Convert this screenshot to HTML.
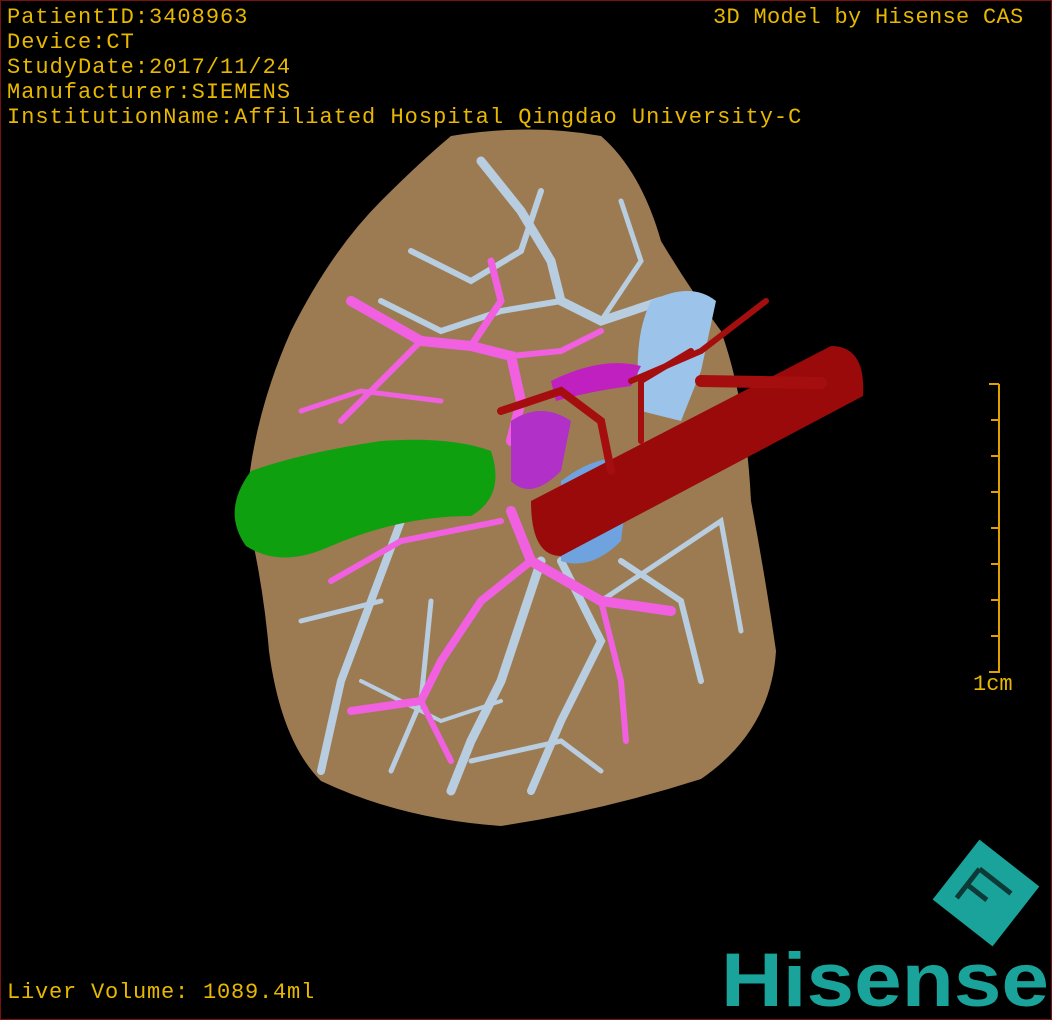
<!DOCTYPE html>
<html><head><meta charset="utf-8"><style>
html,body{margin:0;padding:0;background:#000}
#c{position:relative;width:1050px;height:1018px;border:1px solid #7a1010;background:#000;overflow:hidden;font-family:"Liberation Mono","DejaVu Sans Mono",monospace}
.t{position:absolute;color:#e8b800;font-size:22px;line-height:25px;white-space:pre;letter-spacing:1px}
</style></head><body><div id="c">
<svg width="1050" height="1018" style="position:absolute;left:0;top:0">
<path d="M450,135 Q530,122 600,135 Q640,170 660,240 Q690,290 720,330 Q745,400 750,500 Q765,580 775,650 Q770,730 700,778 Q600,810 500,825 Q400,818 320,780 Q280,740 268,650 Q262,580 245,510 Q250,420 290,330 Q330,250 380,200 Q420,160 450,135Z" fill="#9c7b52"/>
<g fill="none" stroke="#b8cde0" stroke-linecap="round">
<path d="M480,160 L520,210 L550,260 L560,300 L600,320 L660,300" stroke-width="9"/>
<path d="M540,190 L520,250 L470,280 L410,250" stroke-width="6"/>
<path d="M560,300 L500,310 L440,330 L380,300" stroke-width="6"/>
<path d="M600,320 L640,260 L620,200" stroke-width="5"/>
<path d="M540,560 L520,620 L500,680 L470,740 L450,790" stroke-width="9"/>
<path d="M560,560 L600,640 L560,720 L530,790" stroke-width="8"/>
<path d="M620,560 L680,600 L700,680" stroke-width="6"/>
<path d="M400,520 L370,600 L340,680 L320,770" stroke-width="8"/>
<path d="M380,600 L300,620" stroke-width="5"/>
<path d="M430,600 L420,700 L390,770" stroke-width="5"/>
<path d="M600,600 L720,520 L740,630" stroke-width="5"/>
<path d="M470,760 L560,740 L600,770" stroke-width="5"/>
<path d="M360,680 L440,720 L500,700" stroke-width="4"/>
</g>
<g fill="none" stroke="#f060e0" stroke-linecap="round">
<path d="M350,300 L420,340 L470,345 L510,355 L520,400 L510,440" stroke-width="10"/>
<path d="M470,345 L500,300 L490,260" stroke-width="7"/>
<path d="M420,340 L380,380 L340,420" stroke-width="6"/>
<path d="M510,355 L560,350 L600,330" stroke-width="6"/>
<path d="M510,510 L530,560 L600,600 L670,610" stroke-width="10"/>
<path d="M530,560 L480,600 L440,660 L420,700 L350,710" stroke-width="8"/>
<path d="M420,700 L450,760" stroke-width="6"/>
<path d="M500,520 L400,540 L330,580" stroke-width="6"/>
<path d="M600,600 L620,680 L625,740" stroke-width="6"/>
<path d="M440,400 L360,390 L300,410" stroke-width="5"/>
</g>
<path d="M650,300 Q690,280 715,300 L700,370 L680,420 L640,410 Q630,340 650,300Z" fill="#9cc3ea"/>
<path d="M560,480 Q600,450 630,460 L620,540 Q590,570 560,560Z" fill="#6fa3e0"/>
<path d="M510,420 Q540,400 570,420 L560,470 Q530,500 510,480Z" fill="#b030c8"/>
<path d="M550,380 Q600,355 640,365 L630,385 Q590,390 555,400Z" fill="#c020c0"/>
<path d="M250,470 Q300,452 380,440 Q450,435 490,450 Q505,495 470,515 Q400,515 330,545 Q280,568 245,545 Q220,510 250,470Z" fill="#0fa00f"/>
<path d="M530,500 L830,345 Q865,345 862,395 L560,555 Q530,555 530,500Z" fill="#9a0a0a"/>
<g fill="none" stroke="#a50e0e" stroke-linecap="round">
<path d="M500,410 L560,390 L600,420 L610,470" stroke-width="8"/>
<path d="M630,380 L700,350 L765,300" stroke-width="6"/>
<path d="M700,380 L820,382" stroke-width="12"/>
<path d="M640,440 L640,380 L690,350" stroke-width="6"/>
</g>
<g stroke="#e0a000" stroke-width="2">
<line x1="998" y1="383" x2="998" y2="672"/>
<line x1="988" y1="383" x2="998" y2="383"/><line x1="990" y1="419" x2="998" y2="419"/><line x1="990" y1="455" x2="998" y2="455"/><line x1="990" y1="491" x2="998" y2="491"/><line x1="990" y1="527" x2="998" y2="527"/><line x1="990" y1="563" x2="998" y2="563"/><line x1="990" y1="599" x2="998" y2="599"/><line x1="990" y1="635" x2="998" y2="635"/><line x1="988" y1="671" x2="998" y2="671"/>
</g>
<g transform="translate(985,892) rotate(38)">
<rect x="-38" y="-38" width="76" height="76" fill="#1aa39a"/>
<path d="M-20,-15 L-20,22 M-20,-15 L20,-15 M-20,5 L5,5" stroke="#0d3a36" stroke-width="5" fill="none"/>
</g>
<text x="720" y="1005" font-family="Liberation Sans,sans-serif" font-weight="bold" font-size="76" fill="#1aa39a" textLength="328" lengthAdjust="spacingAndGlyphs">Hisense</text>
</svg>
<div class="t" style="left:6px;top:4px">PatientID:3408963
Device:CT
StudyDate:2017/11/24
Manufacturer:SIEMENS
InstitutionName:Affiliated Hospital Qingdao University-C</div>
<div class="t" style="left:712px;top:4px;letter-spacing:0.3px">3D Model by Hisense CAS</div>
<div class="t" style="left:972px;top:671px;letter-spacing:0">1cm</div>
<div class="t" style="left:6px;top:979px;letter-spacing:0.8px">Liver Volume: 1089.4ml</div>
</div></body></html>
